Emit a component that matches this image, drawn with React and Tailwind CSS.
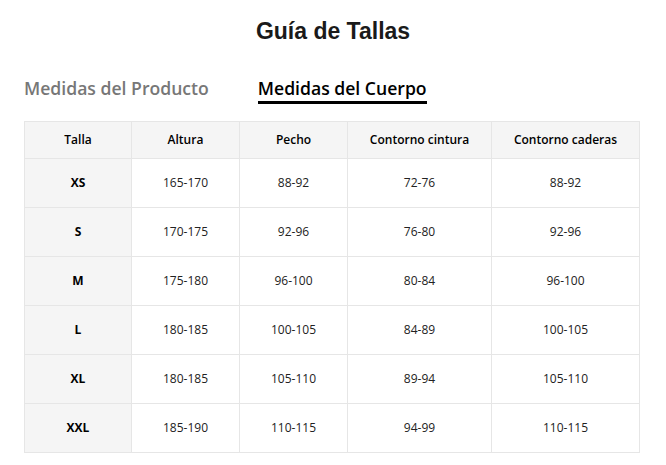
const rows = [
  ["XS", "165-170", "88-92", "72-76", "88-92"],
  ["S", "170-175", "92-96", "76-80", "92-96"],
  ["M", "175-180", "96-100", "80-84", "96-100"],
  ["L", "180-185", "100-105", "84-89", "100-105"],
  ["XL", "180-185", "105-110", "89-94", "105-110"],
  ["XXL", "185-190", "110-115", "94-99", "110-115"],
];

const heads = ["Talla", "Altura", "Pecho", "Contorno cintura", "Contorno caderas"];
const widths = ["w-[107px]", "w-[108px]", "w-[108px]", "w-[144px]", "w-[148px]"];

export default function App() {
  return (
    <div className="w-[666px] h-[465px] bg-white px-[24px] pt-[17px] text-black font-['Open_Sans',sans-serif]">
      <h1 className="text-center text-[23px] leading-[28px] font-bold font-['Liberation_Sans',Arial,sans-serif] text-[#1a1a1a]">
        Guía de Tallas
      </h1>

      <div className="flex gap-[49px] mt-[32px] h-[27px]">
        <span className="text-[17.6px] leading-[22px] font-semibold text-[#777]">Medidas del Producto</span>
        <span className="text-[17.6px] leading-[22px] font-semibold border-b-[3px] border-black h-[27px]">
          Medidas del Cuerpo
        </span>
      </div>

      <table className="mt-[17px] border-collapse table-fixed w-[615px] text-[12px]">
        <thead>
          <tr className="h-[37px] bg-[#f5f5f5]">
            {heads.map((h, i) => (
              <th key={h} className={`${widths[i]} border border-[#e6e6e6] font-semibold text-center`}>
                {h}
              </th>
            ))}
          </tr>
        </thead>
        <tbody>
          {rows.map((r) => (
            <tr key={r[0]} className="h-[49px]">
              {r.map((c, i) => (
                <td
                  key={i}
                  className={
                    i === 0
                      ? "border border-[#e6e6e6] bg-[#f5f5f5] font-bold text-center"
                      : "border border-[#e6e6e6] text-center text-[#222]"
                  }
                >
                  {c}
                </td>
              ))}
            </tr>
          ))}
        </tbody>
      </table>
    </div>
  );
}
